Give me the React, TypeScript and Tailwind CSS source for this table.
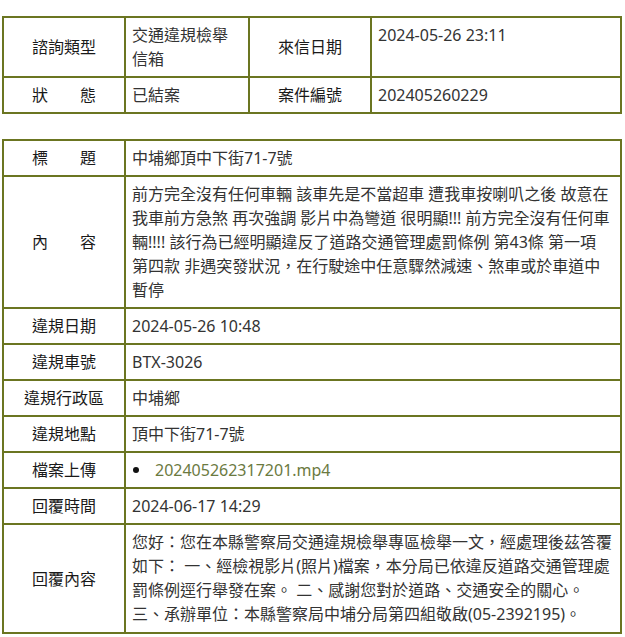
const cellBase = "border-2 border-[#6b7521] px-[6px] py-[5px] leading-[24px]";
const label = `${cellBase} text-center align-middle text-[#1a1a1a]`;
const value = `${cellBase} text-left align-top text-[#333]`;

const rows: { label: string; value: React.ReactNode }[] = [
  { label: "違規日期", value: "2024-05-26 10:48" },
  { label: "違規車號", value: "BTX-3026" },
  { label: "違規行政區", value: "中埔鄉" },
  { label: "違規地點", value: "頂中下街71-7號" },
];

export default function App() {
  return (
    <div
      className="min-h-screen bg-white pl-[2px] pt-[16px] text-[16px]"
      style={{ fontFamily: '"Noto Sans", "Noto Sans CJK TC", sans-serif' }}
    >
      <table className="w-[620px] table-fixed border-collapse">
        <colgroup>
          <col className="w-[122px]" />
          <col className="w-[124px]" />
          <col className="w-[122px]" />
          <col />
        </colgroup>
        <tbody>
          <tr className="h-[59px]">
            <td className={label}>諮詢類型</td>
            <td className={value}>交通違規檢舉信箱</td>
            <td className={label}>來信日期</td>
            <td className={value}>2024-05-26 23:11</td>
          </tr>
          <tr className="h-[36px]">
            <td className={label}>狀　　態</td>
            <td className={value}>已結案</td>
            <td className={label}>案件編號</td>
            <td className={value}>202405260229</td>
          </tr>
        </tbody>
      </table>

      <table className="mt-[25px] w-[620px] table-fixed border-collapse">
        <colgroup>
          <col className="w-[122px]" />
          <col />
        </colgroup>
        <tbody>
          <tr className="h-[36px]">
            <td className={label}>標　　題</td>
            <td className={value}>中埔鄉頂中下街71-7號</td>
          </tr>
          <tr>
            <td className={label}>內　　容</td>
            <td className={value}>
              前方完全沒有任何車輛 該車先是不當超車 遭我車按喇叭之後 故意在我車前方急煞 再次強調 影片中為彎道 很明顯!!! 前方完全沒有任何車輛!!!! 該行為已經明顯違反了道路交通管理處罰條例 第43條 第一項 第四款 非遇突發狀況，在行駛途中任意驟然減速、煞車或於車道中暫停
            </td>
          </tr>
          {rows.map((r) => (
            <tr key={r.label} className="h-[36px]">
              <td className={label}>{r.label}</td>
              <td className={value}>{r.value}</td>
            </tr>
          ))}
          <tr className="h-[36px]">
            <td className={label}>檔案上傳</td>
            <td className={value}>
              <ul>
                <li className="flex items-center">
                  <span className="ml-[1px] mr-[16px] h-[6px] w-[6px] rounded-full bg-[#111]" />
                  <span className="text-[#6b7a3f]">202405262317201.mp4</span>
                </li>
              </ul>
            </td>
          </tr>
          <tr className="h-[36px]">
            <td className={label}>回覆時間</td>
            <td className={value}>2024-06-17 14:29</td>
          </tr>
          <tr>
            <td className={label}>回覆內容</td>
            <td className={`${value} pb-[6px]`}>
              您好：您在本縣警察局交通違規檢舉專區檢舉一文，經處理後茲答覆如下： 一、經檢視影片(照片)檔案，本分局已依違反道路交通管理處罰條例逕行舉發在案。 二、感謝您對於道路、交通安全的關心。
              <br />
              三、承辦單位：本縣警察局中埔分局第四組敬啟(05-2392195)。
            </td>
          </tr>
        </tbody>
      </table>
    </div>
  );
}
